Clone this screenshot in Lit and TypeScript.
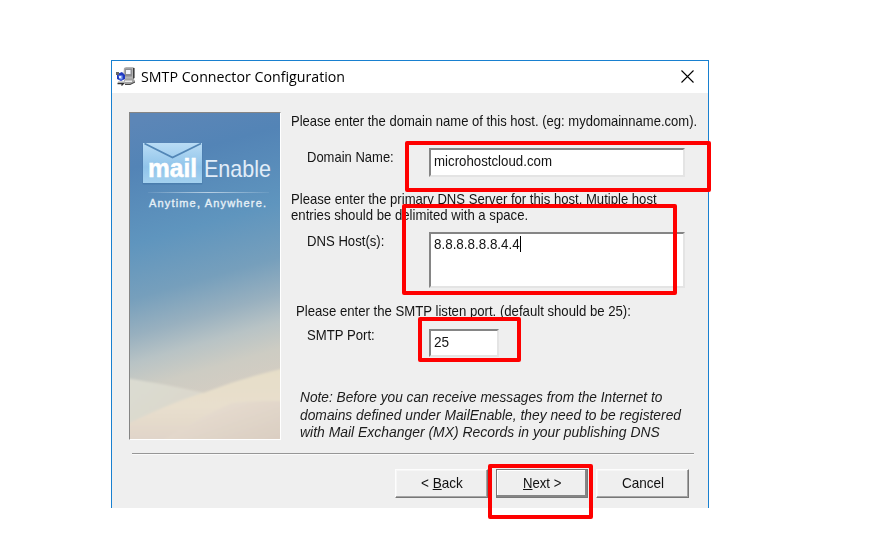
import { LitElement, html, css, svg } from "lit";
import { customElement, property } from "lit/decorators.js";

/** A single line of text condensed or widened to a given width. */
@customElement("fit-text")
class FitText extends LitElement {
  @property({ type: Number }) width = 100;

  static styles = css`
    :host { display: block; white-space: nowrap; }
    .line { display: inline-block; transform-origin: 0 50%; white-space: pre; }
  `;

  updated() {
    const line = this.renderRoot.querySelector(".line") as HTMLElement;
    this.style.width = `${this.width}px`;
    line.style.transform = `scaleX(${this.width / line.offsetWidth})`;
  }

  render() {
    return html`<span class="line"><slot @slotchange=${() => this.requestUpdate()}></slot></span>`;
  }
}

/** Side banner with the product logo above a desert landscape. */
@customElement("brand-banner")
class BrandBanner extends LitElement {
  static styles = css`
    :host { display: block; box-sizing: border-box; width: 152px; height: 328px;
      border: 1px solid; border-color: #858585 #fff #fff #858585; }
    svg { display: block; }
    .mail { font: bold 25px "Liberation Sans", sans-serif; fill: #fff; stroke: #fff; stroke-width: .5; }
    .enable { font: 24px "Liberation Sans", sans-serif; fill: #e2edf8; }
    .tag { font: 11px "Liberation Sans", sans-serif; fill: #e6f0f7; stroke: #e6f0f7; stroke-width: .35; }
  `;

  render() {
    return html`<svg width="150" height="326" viewBox="130 113 150 326">
      ${svg`
      <defs>
        <linearGradient id="sky" gradientUnits="userSpaceOnUse" x1="165" y1="113" x2="245" y2="395">
          <stop offset="0" stop-color="#5c86b7"/>
          <stop offset=".15" stop-color="#5384b6"/>
          <stop offset=".4" stop-color="#5f95be"/>
          <stop offset=".58" stop-color="#769fbc"/>
          <stop offset=".7" stop-color="#98b0bf"/>
          <stop offset=".79" stop-color="#b8c3c5"/>
          <stop offset=".88" stop-color="#cdccc3"/>
          <stop offset="1" stop-color="#d6cdc2"/>
        </linearGradient>
        <linearGradient id="env" x1="0" x2="0" y1="0" y2="1">
          <stop offset="0" stop-color="#b9dcf5"/><stop offset=".6" stop-color="#90c4ea"/>
          <stop offset="1" stop-color="#a4d1ef"/>
        </linearGradient>
        <linearGradient id="far" x1="0" x2="1" y1="0" y2="1">
          <stop offset="0" stop-color="#dbdcd2"/><stop offset="1" stop-color="#dcd5c8"/>
        </linearGradient>
        <linearGradient id="dune" x1="0" x2="0" y1="0" y2="1">
          <stop offset="0" stop-color="#e6dec8"/><stop offset=".5" stop-color="#e8dfcd"/>
          <stop offset="1" stop-color="#dfd3c9"/>
        </linearGradient>
        <linearGradient id="near" x1="0" x2="1" y1="0" y2="1">
          <stop offset="0" stop-color="#eae1d4"/><stop offset="1" stop-color="#d9ccc0"/>
        </linearGradient>
        <linearGradient id="rule" x1="0" x2="1" y1="0" y2="0">
          <stop offset="0" stop-color="#cfe0ee" stop-opacity=".1"/><stop offset=".5" stop-color="#cfe0ee" stop-opacity=".8"/>
          <stop offset="1" stop-color="#cfe0ee" stop-opacity=".1"/>
        </linearGradient>
        <filter id="soft" x="-10%" y="-10%" width="120%" height="120%"><feGaussianBlur stdDeviation=".9"/></filter>
      </defs>
      <rect x="130" y="113" width="150" height="326" fill="url(#sky)"/>
      <g filter="url(#soft)">
        <path d="M125 378Q165 384 205 393L205 445H125Z" fill="url(#far)"/>
        <path d="M125 425Q175 401 206 392Q245 377 285 368V445H125Z" fill="url(#dune)"/>
        <path d="M160 442Q200 417 232 403Q255 400 285 401V445H160Z" fill="url(#near)"/>
      </g>
      <rect x="142.500" y="144" width="60" height="40.500" rx="1" fill="#376b9d" opacity=".4"/>
      <rect x="143" y="143" width="59" height="40" fill="url(#env)"/>
      <path d="M144.500 143.500L172.500 157.500L201 143.500" fill="none" stroke="#5286b6" stroke-width="1.800"/>
      <text class="mail" x="148" y="177" textLength="49" lengthAdjust="spacingAndGlyphs">mail</text>
      <text class="enable" x="204" y="177" textLength="67" lengthAdjust="spacingAndGlyphs">Enable</text>
      <rect x="148" y="192" width="121" height="1" fill="url(#rule)"/>
      <text class="tag" x="149" y="206.500" textLength="117">Anytime, Anywhere.</text>
      `}
    </svg>`;
  }
}

@customElement("app-root")
class AppRoot extends LitElement {
  static styles = css`
    :host { display: block; position: relative; box-sizing: border-box; width: 872px; height: 557px;
      padding: 60px 0 0 111px; background: #fff; overflow: hidden; color: #141414;
      font: 14.5px/16px "Liberation Sans", Arial, sans-serif; }
    .window { box-sizing: border-box; width: 598px; height: 448px; background: #efefef;
      border: 1px solid #1880d0; border-bottom: 0; }
    .titlebar { display: flex; align-items: center; box-sizing: border-box; height: 32px; padding: 0 14px 1px 4px; background: #fff; }
    .appicon { margin-right: 5px; }
    .title { flex: 1; padding-top: 1px; color: #000; font: 14px/20px "Open Sans", "Noto Sans", sans-serif; }
    .body { display: flex; height: 328px; padding: 19px 0 0 17px; }
    .form { padding: 1px 0 0 10px; }
    .row { display: flex; align-items: flex-start; padding-left: 16px; }
    .label { width: 122px; padding-top: 1px; }
    .raised { margin-top: -2px; padding-top: 0; }
    .intro { margin-top: 14px; }
    .port-intro { padding: 15px 0 10px 5px; }
    .first { margin-top: 19px; }
    .dns { margin-top: 9px; }
    .field { box-sizing: border-box; display: flex; width: 256px; height: 29px; padding: 3px 0 0 3px;
      background: #fff; border: 2px solid; border-color: #858585 #e4e4e4 #e4e4e4 #858585; }
    .tall { height: 56px; padding-top: 2px; }
    .small { width: 70px; height: 28px; }
    .caret { width: 1px; height: 16px; background: #000; }
    .note { padding: 32px 0 0 9px; font: italic 14px/17.5px "Liberation Sans", Arial, sans-serif; color: #1c1c1c; }
    .rule { height: 1px; margin: 13px 14px 0 20px; background: #969696; border-bottom: 1px solid #fafafa; }
    .actions { display: flex; padding: 14px 0 0 283px; }
    .button { box-sizing: border-box; display: flex; justify-content: center; width: 93px; height: 29px; padding-top: 5px;
      border: 1px solid; border-color: #fdfdfd #777 #777 #fdfdfd; box-shadow: inset -1px -1px #a5a5a5, inset 1px 1px #f6f6f6; color: #111; }
    .default { width: 92px; margin: 0 8px; border-color: #787878;
      box-shadow: inset -2px -2px #858585, inset 1px 1px #fff; }
    .mark { position: absolute; box-sizing: border-box; border: 4px solid #fe0000; border-radius: 2px; }
    .mark-domain { left: 405px; top: 141px; width: 306px; height: 51px; }
    .mark-dns { left: 402px; top: 204px; width: 275px; height: 91px; }
    .mark-port { left: 418px; top: 317px; width: 103px; height: 45px; }
    .mark-next { left: 488px; top: 464px; width: 105px; height: 55px; }
  `;

  render() {
    return html`
      <div class="window">
        <div class="titlebar">
          <svg class="appicon" width="20" height="22" viewBox="0 0 20 22">
            <path d="M8 2l2-1h7l1.500 1v10l-2 1H9L7 11z" fill="#b4b4b4"/>
            <path d="M8.500 2.500h7.500v8H9z" fill="#8e8e92"/><path d="M10 4h4.500v4H10z" fill="#f2f4fa"/>
            <path d="M17 2h1.500v10l-1.500 1z" fill="#3c3c3c"/>
            <path d="M8 14l2-1.500h7l2 2v2l-5 2.500H9z" fill="#a2a2a2"/>
            <path d="M9 14.500h7v1.500H9z" fill="#ececec"/><path d="M9 18.500h5l5-2.500" fill="none" stroke="#444"/>
            <path d="M1 8l5-2 3 3v4l-4 2-4-2z" fill="#2038c0"/>
            <path d="M2.500 9.500h4v4h-3z" fill="#86a8f4"/><path d="M3 10h2v2H3z" fill="#e4eeff"/>
            <path d="M0 6h3v3H0z" fill="#666"/>
            <path d="M2 15h6v2H2z" fill="#d4d4d4"/><path d="M1.500 17.500h6l-2 2" fill="none" stroke="#333" stroke-width="1.300"/>
          </svg>
          <fit-text class="title" .width=${204}>SMTP Connector Configuration</fit-text>
          <svg width="13" height="13" viewBox="0 0 13 13"><path d="M.5.5l12 12M12.500.5l-12 12" stroke="#000" stroke-width="1.100"/></svg>
        </div>
        <div class="body">
          <brand-banner></brand-banner>
          <div class="form">
            <fit-text .width=${406}>Please enter the domain name of this host. (eg: mydomainname.com).</fit-text>
            <div class="row first">
              <div class="label"><fit-text .width=${87}>Domain Name:</fit-text></div>
              <div class="field"><fit-text .width=${118}>microhostcloud.com</fit-text></div>
            </div>
            <div class="intro">
              <fit-text .width=${366}>Please enter the primary DNS Server for this host. Mutiple host</fit-text>
              <fit-text .width=${237}>entries should be delimited with a space.</fit-text>
            </div>
            <div class="row dns">
              <div class="label"><fit-text .width=${77}>DNS Host(s):</fit-text></div>
              <div class="field tall"><fit-text .width=${86}>8.8.8.8.8.8.4.4</fit-text><span class="caret"></span></div>
            </div>
            <div class="port-intro">
              <fit-text .width=${335}>Please enter the SMTP listen port. (default should be 25):</fit-text>
            </div>
            <div class="row">
              <div class="label raised"><fit-text .width=${68}>SMTP Port:</fit-text></div>
              <div class="field small"><fit-text .width=${15}>25</fit-text></div>
            </div>
            <div class="note">
              <fit-text .width=${362}>Note: Before you can receive messages from the Internet to</fit-text>
              <fit-text .width=${381}>domains defined under MailEnable, they need to be registered</fit-text>
              <fit-text .width=${360}>with Mail Exchanger (MX) Records in your publishing DNS</fit-text>
            </div>
          </div>
        </div>
        <div class="rule"></div>
        <div class="actions">
          <div class="button"><fit-text .width=${42}>&lt; <u>B</u>ack</fit-text></div>
          <div class="button default"><fit-text .width=${38}><u>N</u>ext &gt;</fit-text></div>
          <div class="button"><fit-text .width=${42}>Cancel</fit-text></div>
        </div>
      </div>
      <div class="mark mark-domain"></div>
      <div class="mark mark-dns"></div>
      <div class="mark mark-port"></div>
      <div class="mark mark-next"></div>
    `;
  }
}
